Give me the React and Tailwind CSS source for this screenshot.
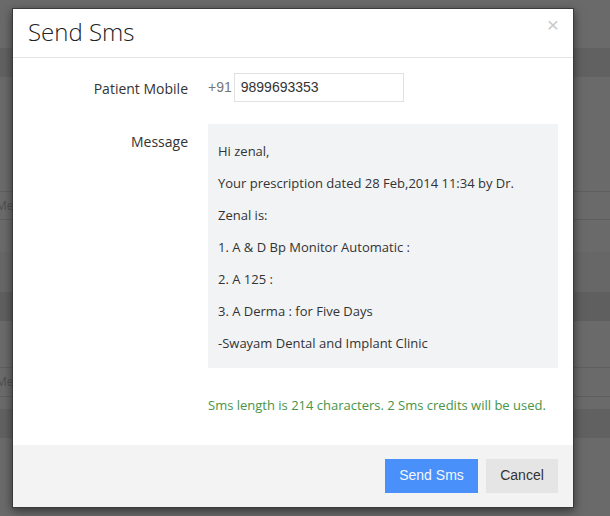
import React from 'react';

const openSans = "font-['Open_Sans','Liberation_Sans',sans-serif]";
const arial = "font-['Liberation_Sans',Arial,sans-serif]";

const messageLines = [
  'Hi zenal,',
  'Your prescription dated 28 Feb,2014 11:34 by Dr.',
  'Zenal is:',
  '1. A & D Bp Monitor Automatic :',
  '2. A 125 :',
  '3. A Derma : for Five Days',
  '-Swayam Dental and Implant Clinic',
];

function Backdrop() {
  // faded page behind the dialog
  return (
    <div className="flex flex-col w-full h-[516px] bg-[#6a6a6a]">
      <div className="h-[48px]" />
      <div className="h-[29px] bg-[#616161]" />
      <div className="h-[114px]" />
      <div className="h-[29px] border-y border-[#5f5f5f] flex items-center">
        <span className={`${openSans} text-[12px] text-[#4f4f4f] -ml-[4px]`}>Mel</span>
      </div>
      <div className="h-[32px]" />
      <div className="h-[40px] bg-[#676767]" />
      <div className="h-[29px] bg-[#5f5f5f]" />
      <div className="h-[46px]" />
      <div className="h-[30px] border-y border-[#5f5f5f] flex items-center">
        <span className={`${openSans} text-[12px] text-[#4f4f4f] -ml-[4px]`}>Mel</span>
      </div>
      <div className="h-[12px]" />
      <div className="h-[29px] bg-[#616161]" />
      <div className="flex-1" />
    </div>
  );
}

function SendSmsModal() {
  return (
    <div className="absolute left-[12px] top-[8px] w-[562px] h-[500px] bg-white border border-[#3a3a3a] shadow-[0_3px_9px_rgba(0,0,0,0.5)] flex flex-col">
      <div className="relative h-[49px] border-b border-[#e5e5e5] flex items-center pl-[15px] pb-[2px]">
        <h4 className={`${openSans} font-light text-[24px] text-[#222] leading-none`}>Send Sms</h4>
        <span className={`${arial} absolute right-[14px] top-[5px] text-[21px] text-[#c9c9c9] leading-none`}>×</span>
      </div>

      <div className="flex-1 pt-[15px]">
        <div className="flex items-center">
          <label className={`${openSans} w-[175px] text-right text-[14px] text-[#333] pt-[2px]`}>Patient Mobile</label>
          <div className="flex items-center ml-[20px]">
            <span className={`${arial} text-[14px] text-[#777] mr-[2px]`}>+91</span>
            <div className={`${arial} w-[170px] h-[29px] border border-[#e1e1e1] flex items-center pl-[6px] text-[14px] text-[#333]`}>
              9899693353
            </div>
          </div>
        </div>

        <div className="flex mt-[22px]">
          <label className={`${openSans} w-[175px] text-right text-[14px] text-[#333] pt-[7px]`}>Message</label>
          <div className="ml-[20px] flex flex-col gap-[28px]">
            <div className="w-[350px] bg-[#f2f3f5] pl-[10px] pt-[11px] pb-[9px]">
              {messageLines.map((line) => (
                <p key={line} className={`${openSans} h-[32px] leading-[32px] text-[13px] text-[#333]`}>{line}</p>
              ))}
            </div>
            <p className={`${openSans} text-[13px] text-[#479447]`}>
              Sms length is 214 characters. 2 Sms credits will be used.
            </p>
          </div>
        </div>
      </div>

      <div className="h-[62px] bg-[#f3f3f3] flex items-center justify-end gap-[8px] pr-[15px]">
        <button className={`${arial} h-[34px] w-[93px] bg-[#4a90fa] text-[14px] text-[#f4f8ff] pb-[2px]`}>Send Sms</button>
        <button className={`${arial} h-[34px] w-[72px] bg-[#e5e5e5] text-[14px] text-[#333] pb-[2px]`}>Cancel</button>
      </div>
    </div>
  );
}

export default function App() {
  return (
    <div className="relative w-[610px] h-[516px] overflow-hidden">
      <Backdrop />
      <SendSmsModal />
    </div>
  );
}
